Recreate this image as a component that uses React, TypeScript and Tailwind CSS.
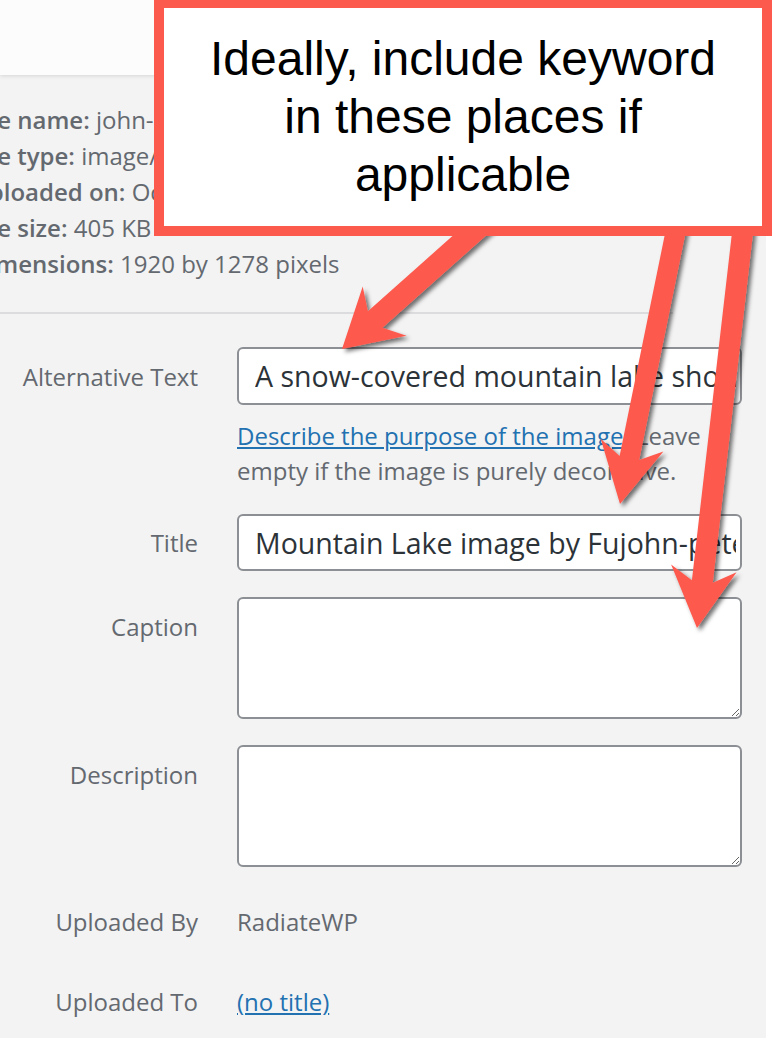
import React from "react";

type Arrow = { sx: number; sy: number; tx: number; ty: number; w: number; L: number; H: number };

const ARROWS: Arrow[] = [
  { sx: 487, sy: 220, tx: 342, ty: 349, w: 22, L: 57, H: 33 },
  { sx: 678, sy: 220, tx: 620, ty: 504, w: 20, L: 60, H: 32 },
  { sx: 744, sy: 220, tx: 697, ty: 628, w: 21, L: 60, H: 33 },
];

function arrowPoints(a: Arrow): string {
  const dx = a.tx - a.sx;
  const dy = a.ty - a.sy;
  const len = Math.hypot(dx, dy);
  const ux = dx / len;
  const uy = dy / len;
  const nx = -uy;
  const ny = ux;
  const J = a.L * 0.78;
  const hw = a.w / 2;
  const p = (x: number, y: number) => `${x.toFixed(1)},${y.toFixed(1)}`;
  return [
    p(a.sx + nx * hw, a.sy + ny * hw),
    p(a.tx - ux * J + nx * hw, a.ty - uy * J + ny * hw),
    p(a.tx - ux * a.L + nx * a.H, a.ty - uy * a.L + ny * a.H),
    p(a.tx, a.ty),
    p(a.tx - ux * a.L - nx * a.H, a.ty - uy * a.L - ny * a.H),
    p(a.tx - ux * J - nx * hw, a.ty - uy * J - ny * hw),
    p(a.sx - nx * hw, a.sy - ny * hw),
  ].join(" ");
}

function FormRow({
  label,
  labelH,
  mt,
  children,
}: {
  label: string;
  labelH: string;
  mt: string;
  children: React.ReactNode;
}) {
  return (
    <div className={`flex ${mt}`}>
      <div className={`w-[198px] shrink-0 flex items-center justify-end text-right ${labelH}`}>{label}</div>
      <div className="ml-[39px] w-[505px]">{children}</div>
    </div>
  );
}

export default function App() {
  return (
    <div className="relative w-[776px] h-[1038px] overflow-hidden bg-white font-['Open_Sans',sans-serif]">
      <div className="w-[766px] h-full bg-[#f3f3f3] flex flex-col">
        <div className="relative z-10 h-[75px] shrink-0 bg-[#fcfcfc] shadow-[0_1px_4px_rgba(0,0,0,0.12)]" />

        <div className="pt-[27px] -ml-[29px] text-[24px] leading-[36px] text-[#646970] whitespace-nowrap">
          <div>
            <span className="font-semibold">File name:</span> john-peter-mountain-lake.jpg
          </div>
          <div>
            <span className="font-semibold">File type:</span> image/jpeg
          </div>
          <div>
            <span className="font-semibold">Uploaded on:</span> October 8, 2020
          </div>
          <div>
            <span className="font-semibold">File size:</span> 405 KB
          </div>
          <div>
            <span className="font-semibold">Dimensions:</span> 1920 by 1278 pixels
          </div>
        </div>

        <div className="mt-[30px] h-[2px] w-[673px] shrink-0 bg-[#dcdcde]" />

        <div className="text-[24px] leading-[35px] text-[#646970]">
          <FormRow label="Alternative Text" labelH="h-[58px]" mt="mt-[33px]">
            <input
              readOnly
              value="A snow-covered mountain lake showing reflections of trees"
              className="block w-full h-[58px] rounded-[6px] border-2 border-[#8c8f94] bg-white pl-[16px] pr-[4px] text-[28.5px] text-[#2c3338] outline-none"
            />
            <p className="mt-[13px]">
              <a className="text-[#2271b1] underline">Describe the purpose of the image</a>. Leave
              <br />
              empty if the image is purely decorative.
            </p>
          </FormRow>

          <FormRow label="Title" labelH="h-[57px]" mt="mt-[26px]">
            <input
              readOnly
              value="Mountain Lake image by Fujohn-peter"
              className="block w-full h-[57px] rounded-[6px] border-2 border-[#8c8f94] bg-white pl-[16px] pr-[4px] text-[28.5px] text-[#2c3338] outline-none"
            />
          </FormRow>

          <FormRow label="Caption" labelH="h-[58px]" mt="mt-[26px]">
            <textarea
              readOnly
              className="block w-full h-[122px] rounded-[6px] border-2 border-[#8c8f94] bg-white outline-none"
            />
          </FormRow>

          <FormRow label="Description" labelH="h-[58px]" mt="mt-[26px]">
            <textarea
              readOnly
              className="block w-full h-[122px] rounded-[6px] border-2 border-[#8c8f94] bg-white outline-none"
            />
          </FormRow>

          <FormRow label="Uploaded By" labelH="h-[36px]" mt="mt-[36px]">
            <div className="h-[36px] flex items-center">RadiateWP</div>
          </FormRow>

          <FormRow label="Uploaded To" labelH="h-[36px]" mt="mt-[44px]">
            <div className="h-[36px] flex items-center">
              <a className="text-[#2271b1] underline">(no title)</a>
            </div>
          </FormRow>
        </div>
      </div>

      <svg
        className="absolute left-0 top-0 z-20 pointer-events-none"
        width={776}
        height={1038}
        viewBox="0 0 776 1038"
      >
        <defs>
          <filter id="arrowShadow" x="-30%" y="-30%" width="160%" height="160%">
            <feDropShadow dx="3" dy="3" stdDeviation="2" floodColor="#000" floodOpacity="0.55" />
          </filter>
        </defs>
        {ARROWS.map((a, i) => (
          <polygon key={i} points={arrowPoints(a)} fill="#fd5a4e" filter="url(#arrowShadow)" />
        ))}
      </svg>

      <div className="absolute z-30 left-[154px] top-[-2px] w-[618px] h-[238px] border-[10px] border-[#fd5a4e] bg-white flex items-center justify-center text-center font-['Liberation_Sans',Arial,sans-serif] text-[48px] leading-[58px] text-black">
        <div>
          Ideally, include keyword
          <br />
          in these places if
          <br />
          applicable
        </div>
      </div>
    </div>
  );
}
